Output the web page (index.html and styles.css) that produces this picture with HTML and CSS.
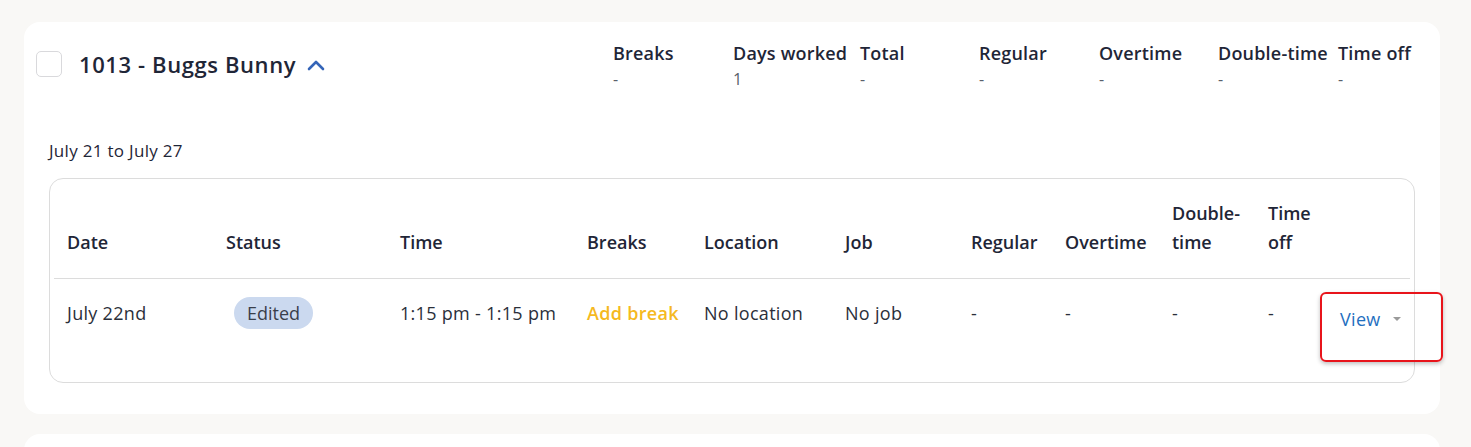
FILE: index.html
```html
<!DOCTYPE html>
<html lang="en">
<head>
    <meta charset="UTF-8">
    <meta name="viewport" content="width=device-width, initial-scale=1.0">
    <title>Timesheets</title>
    <link rel="stylesheet" href="styles.css">
</head>
<body>
    <div class="employee-card">
        <div class="employee-header">
            <div class="employee-name">
                <span class="checkbox"></span>
                <h2>1013 - Buggs Bunny</h2>
                <svg class="chevron" width="20" height="14" viewBox="0 0 20 14">
                    <path d="M3 11 L10 4 L17 11" fill="none" stroke="#3565b8" stroke-width="2.6" stroke-linecap="round" stroke-linejoin="round"/>
                </svg>
            </div>
            <div class="summary">
                <div class="summary-col"><span class="label">Breaks</span><span class="value">-</span></div>
                <div class="summary-col"><span class="label">Days worked</span><span class="value">1</span></div>
                <div class="summary-col"><span class="label">Total</span><span class="value">-</span></div>
                <div class="summary-col"><span class="label">Regular</span><span class="value">-</span></div>
                <div class="summary-col"><span class="label">Overtime</span><span class="value">-</span></div>
                <div class="summary-col"><span class="label">Double-time</span><span class="value">-</span></div>
                <div class="summary-col"><span class="label">Time off</span><span class="value">-</span></div>
            </div>
        </div>

        <div class="week-range">July 21 to July 27</div>

        <div class="shifts-table">
            <div class="table-row table-head">
                <div>Date</div>
                <div>Status</div>
                <div>Time</div>
                <div>Breaks</div>
                <div>Location</div>
                <div>Job</div>
                <div>Regular</div>
                <div>Overtime</div>
                <div>Double-<br>time</div>
                <div>Time<br>off</div>
                <div></div>
            </div>
            <div class="table-row table-body">
                <div>July 22nd</div>
                <div><span class="badge">Edited</span></div>
                <div>1:15 pm - 1:15 pm</div>
                <div class="add-break">Add break</div>
                <div>No location</div>
                <div>No job</div>
                <div>-</div>
                <div>-</div>
                <div>-</div>
                <div>-</div>
                <div class="action-cell">
                    <span class="view-link">View <span class="caret"></span></span>
                    <span class="highlight"></span>
                </div>
            </div>
        </div>
    </div>

    <div class="employee-card next-card"></div>
</body>
</html>
```

FILE: styles.css
```css
* {
    margin: 0;
    padding: 0;
    box-sizing: border-box;
}

body {
    font-family: "Open Sans", Lato, sans-serif;
    background-color: #f9f8f6;
    color: #1f2637;
    padding: 22px 31px 0 24px;
    overflow: hidden;
    height: 447px;
}

.employee-card {
    background-color: #ffffff;
    border-radius: 16px;
    padding: 20px 12px 32px 12px;
    height: 392px;
}

.next-card {
    margin-top: 20px;
    height: 60px;
}

.employee-header {
    display: flex;
    justify-content: space-between;
}

.employee-name {
    display: flex;
    align-items: center;
    height: 46px;
    margin-top: -1px;
}

.checkbox {
    width: 26px;
    height: 26px;
    border: 1px solid #d9d9dc;
    border-radius: 5px;
    margin-right: 17px;
}

.employee-name h2 {
    font-size: 22px;
    font-weight: 600;
    letter-spacing: 0.6px;
    color: #1f2637;
}

.chevron {
    margin-left: 10px;
    margin-top: 2px;
}

.summary {
    display: grid;
    grid-template-columns: 120px 127px 119px 120px 119px 120px 78px;
    margin-right: 12px;
}

.summary-col {
    display: flex;
    flex-direction: column;
}

.summary .label {
    font-size: 18px;
    font-weight: 600;
    letter-spacing: 0.2px;
    line-height: 22px;
    white-space: nowrap;
}

.summary .value {
    font-size: 16px;
    line-height: 30px;
    color: #5a5f6a;
}

.week-range {
    margin: 45px 0 0 13px;
    font-size: 17px;
    letter-spacing: 0.3px;
    color: #1f2637;
}

.shifts-table {
    margin: 16px 13px 0 13px;
    border: 1px solid #dcdcdc;
    border-radius: 14px;
    padding: 0 4px;
    height: 205px;
}

.table-row {
    display: grid;
    grid-template-columns: 159px 174px 187px 117px 141px 126px 94px 107px 96px 72px 1fr;
    padding-left: 13px;
}

.table-head {
    height: 100px;
    align-items: end;
    padding-bottom: 21px;
    border-bottom: 1px solid #dcdcdc;
    font-size: 18px;
    font-weight: 600;
    line-height: 29px;
}

.table-body {
    padding-top: 18px;
    align-items: start;
    font-size: 18px;
    letter-spacing: 0.3px;
    color: #2b2f3a;
    line-height: 32px;
}

.badge {
    display: inline-block;
    margin-left: 8px;
    padding: 0 13px;
    height: 32px;
    line-height: 32px;
    border-radius: 16px;
    background-color: #cbd9ef;
    color: #3a3f4b;
    letter-spacing: 0;
}

.add-break {
    color: #f5b921;
    font-weight: 600;
}

.action-cell {
    position: relative;
    padding-top: 6px;
}

.view-link {
    color: #1f6fbf;
    display: inline-flex;
    align-items: center;
}

.caret {
    display: inline-block;
    margin-left: 12px;
    border-left: 4px solid transparent;
    border-right: 4px solid transparent;
    border-top: 4px solid #9a9a9a;
}

.highlight {
    position: absolute;
    left: -20px;
    top: -5px;
    width: 123px;
    height: 70px;
    border: 2px solid #e8141b;
    border-radius: 6px;
    box-shadow: 0 2px 4px rgba(0, 0, 0, 0.25);
    pointer-events: none;
}
```
